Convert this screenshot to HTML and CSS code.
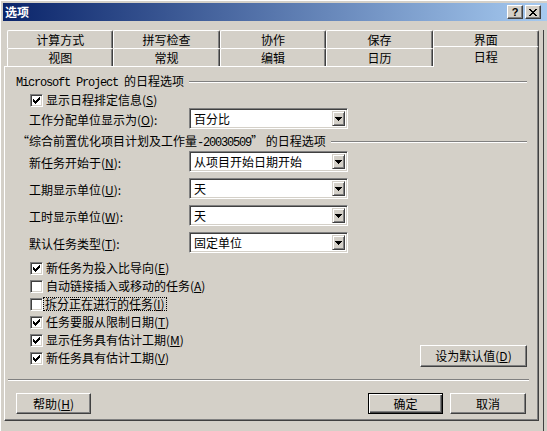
FILE: index.html
```html
<!DOCTYPE html>
<html lang="zh-CN">
<head>
<meta charset="utf-8">
<title>选项</title>
<link rel="stylesheet" href="styles.css">
</head>
<body>
<div class="window">
  <div class="titlebar">
    <span class="title">选项</span>
    <div class="caption-btns">
      <span class="cap-btn help">?</span>
      <span class="cap-btn">
        <svg width="8" height="7" viewBox="0 0 8 7" shape-rendering="crispEdges"><path d="M0 0h2v1h-2z M6 0h2v1h-2z M1 1h2v1h-2z M5 1h2v1h-2z M2 2h4v1h-4z M3 3h2v1h-2z M2 4h4v1h-4z M1 5h2v1h-2z M5 5h2v1h-2z M0 6h2v1h-2z M6 6h2v1h-2z" fill="#000"/></svg>
      </span>
    </div>
  </div>
  <div class="frame">
    <div class="tabs">
      <div class="tab-row">
        <div class="tab">计算方式</div>
        <div class="tab">拼写检查</div>
        <div class="tab">协作</div>
        <div class="tab">保存</div>
        <div class="tab">界面</div>
      </div>
      <div class="tab-row">
        <div class="tab">视图</div>
        <div class="tab">常规</div>
        <div class="tab">编辑</div>
        <div class="tab">日历</div>
        <div class="tab active">日程</div>
      </div>
    </div>
    <div class="panel">
      <div class="group-title g1"><span class="gt-text"><span class="mono">Microsoft Project </span>的日程选项</span><span class="etch"></span></div>
      <div class="cb-row first">
        <span class="cb"><svg width="11" height="11" viewBox="0 0 11 11" shape-rendering="crispEdges"><path d="M2 4h1v3h-1z M3 5h1v3h-1z M4 6h1v3h-1z M5 5h1v3h-1z M6 4h1v3h-1z M7 3h1v3h-1z M8 2h1v3h-1z" fill="#000"/></svg></span>
        <span class="cb-label">显示日程排定信息(<u>S</u>)</span>
      </div>
      <div class="field-row">
        <span class="label">工作分配单位显示为(<u>O</u>):</span>
        <div class="combo"><span class="combo-text">百分比</span><span class="combo-btn"><svg width="7" height="4" viewBox="0 0 7 4" shape-rendering="crispEdges"><path d="M0 0h7v1h-7z M1 1h5v1h-5z M2 2h3v1h-3z M3 3h1v1h-1z" fill="#000"/></svg></span></div>
      </div>
      <div class="group-title g2"><span class="gt-text">“综合前置优化项目计划及工作量<span class="mono">-20030509</span>” 的日程选项</span><span class="etch"></span></div>
      <div class="field-row tight">
        <span class="label">新任务开始于(<u>N</u>):</span>
        <div class="combo"><span class="combo-text">从项目开始日期开始</span><span class="combo-btn"><svg width="7" height="4" viewBox="0 0 7 4" shape-rendering="crispEdges"><path d="M0 0h7v1h-7z M1 1h5v1h-5z M2 2h3v1h-3z M3 3h1v1h-1z" fill="#000"/></svg></span></div>
      </div>
      <div class="field-row">
        <span class="label">工期显示单位(<u>U</u>):</span>
        <div class="combo"><span class="combo-text">天</span><span class="combo-btn"><svg width="7" height="4" viewBox="0 0 7 4" shape-rendering="crispEdges"><path d="M0 0h7v1h-7z M1 1h5v1h-5z M2 2h3v1h-3z M3 3h1v1h-1z" fill="#000"/></svg></span></div>
      </div>
      <div class="field-row">
        <span class="label">工时显示单位(<u>W</u>):</span>
        <div class="combo"><span class="combo-text">天</span><span class="combo-btn"><svg width="7" height="4" viewBox="0 0 7 4" shape-rendering="crispEdges"><path d="M0 0h7v1h-7z M1 1h5v1h-5z M2 2h3v1h-3z M3 3h1v1h-1z" fill="#000"/></svg></span></div>
      </div>
      <div class="field-row">
        <span class="label">默认任务类型(<u>T</u>):</span>
        <div class="combo"><span class="combo-text">固定单位</span><span class="combo-btn"><svg width="7" height="4" viewBox="0 0 7 4" shape-rendering="crispEdges"><path d="M0 0h7v1h-7z M1 1h5v1h-5z M2 2h3v1h-3z M3 3h1v1h-1z" fill="#000"/></svg></span></div>
      </div>
      <div class="options">
        <div class="cb-list">
          <div class="cb-row">
            <span class="cb"><svg width="11" height="11" viewBox="0 0 11 11" shape-rendering="crispEdges"><path d="M2 4h1v3h-1z M3 5h1v3h-1z M4 6h1v3h-1z M5 5h1v3h-1z M6 4h1v3h-1z M7 3h1v3h-1z M8 2h1v3h-1z" fill="#000"/></svg></span>
            <span class="cb-label">新任务为投入比导向(<u>E</u>)</span>
          </div>
          <div class="cb-row">
            <span class="cb"></span>
            <span class="cb-label">自动链接插入或移动的任务(<u>A</u>)</span>
          </div>
          <div class="cb-row">
            <span class="cb"></span>
            <span class="cb-label focus">拆分正在进行的任务(<u>I</u>)</span>
          </div>
          <div class="cb-row">
            <span class="cb"><svg width="11" height="11" viewBox="0 0 11 11" shape-rendering="crispEdges"><path d="M2 4h1v3h-1z M3 5h1v3h-1z M4 6h1v3h-1z M5 5h1v3h-1z M6 4h1v3h-1z M7 3h1v3h-1z M8 2h1v3h-1z" fill="#000"/></svg></span>
            <span class="cb-label">任务要服从限制日期(<u>T</u>)</span>
          </div>
          <div class="cb-row">
            <span class="cb"><svg width="11" height="11" viewBox="0 0 11 11" shape-rendering="crispEdges"><path d="M2 4h1v3h-1z M3 5h1v3h-1z M4 6h1v3h-1z M5 5h1v3h-1z M6 4h1v3h-1z M7 3h1v3h-1z M8 2h1v3h-1z" fill="#000"/></svg></span>
            <span class="cb-label">显示任务具有估计工期(<u>M</u>)</span>
          </div>
          <div class="cb-row">
            <span class="cb"><svg width="11" height="11" viewBox="0 0 11 11" shape-rendering="crispEdges"><path d="M2 4h1v3h-1z M3 5h1v3h-1z M4 6h1v3h-1z M5 5h1v3h-1z M6 4h1v3h-1z M7 3h1v3h-1z M8 2h1v3h-1z" fill="#000"/></svg></span>
            <span class="cb-label">新任务具有估计工期(<u>V</u>)</span>
          </div>
        </div>
        <div class="btn default-btn">设为默认值(<u>D</u>)</div>
      </div>
      <div class="separator"></div>
      <div class="button-bar">
        <div class="btn help-btn">帮助(<u>H</u>)</div>
        <div class="bar-right">
          <div class="btn ok-btn">确定</div>
          <div class="btn cancel-btn">取消</div>
        </div>
      </div>
    </div>
  </div>
</div>
</body>
</html>
```
FILE: styles.css
```css
* { box-sizing: border-box; }
html, body { margin: 0; padding: 0; }
body {
  width: 547px;
  height: 431px;
  overflow: hidden;
  background: #d4d0c8;
  color: #000;
  font-family: "Noto Sans CJK SC", "Liberation Sans", sans-serif;
  font-size: 12px;
  line-height: 14px;
}
u { text-decoration: underline; text-underline-offset: 1px; }
.mono {
  font-family: "Liberation Mono", monospace;
  font-size: 12px;
  letter-spacing: -1.2px;
}

.window {
  width: 547px;
  height: 431px;
  padding: 2px 0 0 2px;
  border-top: 1px solid #fff;
  border-left: 1px solid #fff;
}

/* title bar */
.titlebar {
  height: 18px;
  background: linear-gradient(to right, #0a246a, #a6caf0);
  display: flex;
  align-items: center;
  justify-content: space-between;
  padding: 0 6px 0 2px;
}
.title { color: #fff; font-weight: bold; font-size: 12px; }
.caption-btns { display: flex; gap: 2px; }
.cap-btn {
  width: 16px;
  height: 14px;
  background: #d4d0c8;
  border: 1px solid;
  border-color: #fff #404040 #404040 #fff;
  box-shadow: inset -1px -1px #808080;
  display: flex;
  align-items: center;
  justify-content: center;
}
.cap-btn.help {
  font-family: "Liberation Sans", sans-serif;
  font-weight: bold;
  font-size: 11px;
  line-height: 11px;
}

/* frame below title */
.frame {
  width: 541px;
  height: 405px;
  border-right: 1px solid #404040;
  border-bottom: 1px solid #404040;
}

/* tabs */
.tabs { margin: 9px 0 0 4px; width: 532px; }
.tab-row { display: flex; height: 18px; }
.tab {
  flex: 1;
  background: #d4d0c8;
  border-top: 1px solid #fff;
  border-left: 1px solid #fff;
  border-right: 1px solid #404040;
  box-shadow: inset -1px 0 #808080;
  border-radius: 2px 2px 0 0;
  display: flex;
  align-items: center;
  justify-content: center;
}
.tab.active {
  height: 21px;
  margin-top: -2px;
  position: relative;
  z-index: 1;
  padding-bottom: 1px;
}

/* panel */
.panel {
  margin-left: 1px;
  width: 535px;
  height: 355px;
  border-top: 1px solid #fff;
  border-left: 1px solid #fff;
  border-right: 1px solid #404040;
  border-bottom: 1px solid #404040;
  box-shadow: inset -1px -1px #808080;
  padding-top: 8px;
}

.group-title {
  height: 14px;
  display: flex;
  align-items: center;
  margin-right: 11px;
}
.group-title.g1 { padding-left: 11px; }
.group-title.g2 { padding-left: 12px; margin-top: 6px; }
.gt-text { white-space: nowrap; }
.etch {
  flex: 1;
  height: 2px;
  margin-left: 5px;
  border-top: 1px solid #808080;
  border-bottom: 1px solid #fff;
}

.cb-row {
  height: 18px;
  display: flex;
  align-items: center;
  padding-left: 25px;
  gap: 3px;
}
.cb-row.first { height: 16px; margin-top: 3px; }
.cb {
  width: 13px;
  height: 13px;
  flex: none;
  background: #fff;
  border: 1px solid;
  border-color: #808080 #fff #fff #808080;
  box-shadow: inset 1px 1px #404040, inset -1px -1px #d4d0c8;
}
.cb svg { display: block; }
.cb-label { white-space: nowrap; }
.cb-label.focus {
  outline: 1px dotted #000;
  outline-offset: 0;
  line-height: 12px;
  padding: 0 1px;
  margin-left: -2px;
}

.field-row {
  height: 21px;
  display: flex;
  align-items: center;
  padding-left: 24px;
  margin-top: 6px;
}
.cb-row.first + .field-row { margin-top: 0; }
.field-row.tight { margin-top: 2px; }
.label { width: 160px; flex: none; padding-top: 2px; white-space: nowrap; }

.combo {
  width: 159px;
  height: 21px;
  background: #fff;
  border: 1px solid;
  border-color: #808080 #fff #fff #808080;
  box-shadow: inset 1px 1px #404040, inset -1px -1px #d4d0c8;
  display: flex;
  align-items: center;
  justify-content: space-between;
  padding: 0 2px 0 4px;
}
.combo-text { white-space: nowrap; }
.combo-btn {
  width: 13px;
  height: 15px;
  background: #d4d0c8;
  border: 1px solid;
  border-color: #d4d0c8 #404040 #404040 #d4d0c8;
  box-shadow: inset 1px 1px #fff, inset -1px -1px #808080;
  display: flex;
  align-items: center;
  justify-content: center;
}
.combo-btn svg { display: block; }

.options {
  margin-top: 6px;
  display: flex;
  justify-content: space-between;
  align-items: flex-end;
  padding-right: 11px;
}
.cb-list { display: flex; flex-direction: column; }

.btn {
  height: 21px;
  background: #d4d0c8;
  border: 1px solid;
  border-color: #fff #404040 #404040 #fff;
  box-shadow: inset -1px -1px #808080;
  display: flex;
  align-items: center;
  justify-content: center;
  white-space: nowrap;
}
.default-btn { width: 107px; height: 22px; }

.separator {
  margin: 12px 9px 0 3px;
  height: 2px;
  border-top: 1px solid #808080;
  border-bottom: 1px solid #fff;
}

.button-bar {
  margin-top: 12px;
  display: flex;
  justify-content: space-between;
  padding: 0 12px 0 11px;
}
.help-btn { width: 75px; }
.bar-right { display: flex; gap: 7px; }
.ok-btn {
  width: 75px;
  border: 1px solid #000;
  box-shadow: inset 1px 1px #fff, inset -1px -1px #404040, inset -2px -2px #808080;
}
.cancel-btn { width: 76px; }
```
